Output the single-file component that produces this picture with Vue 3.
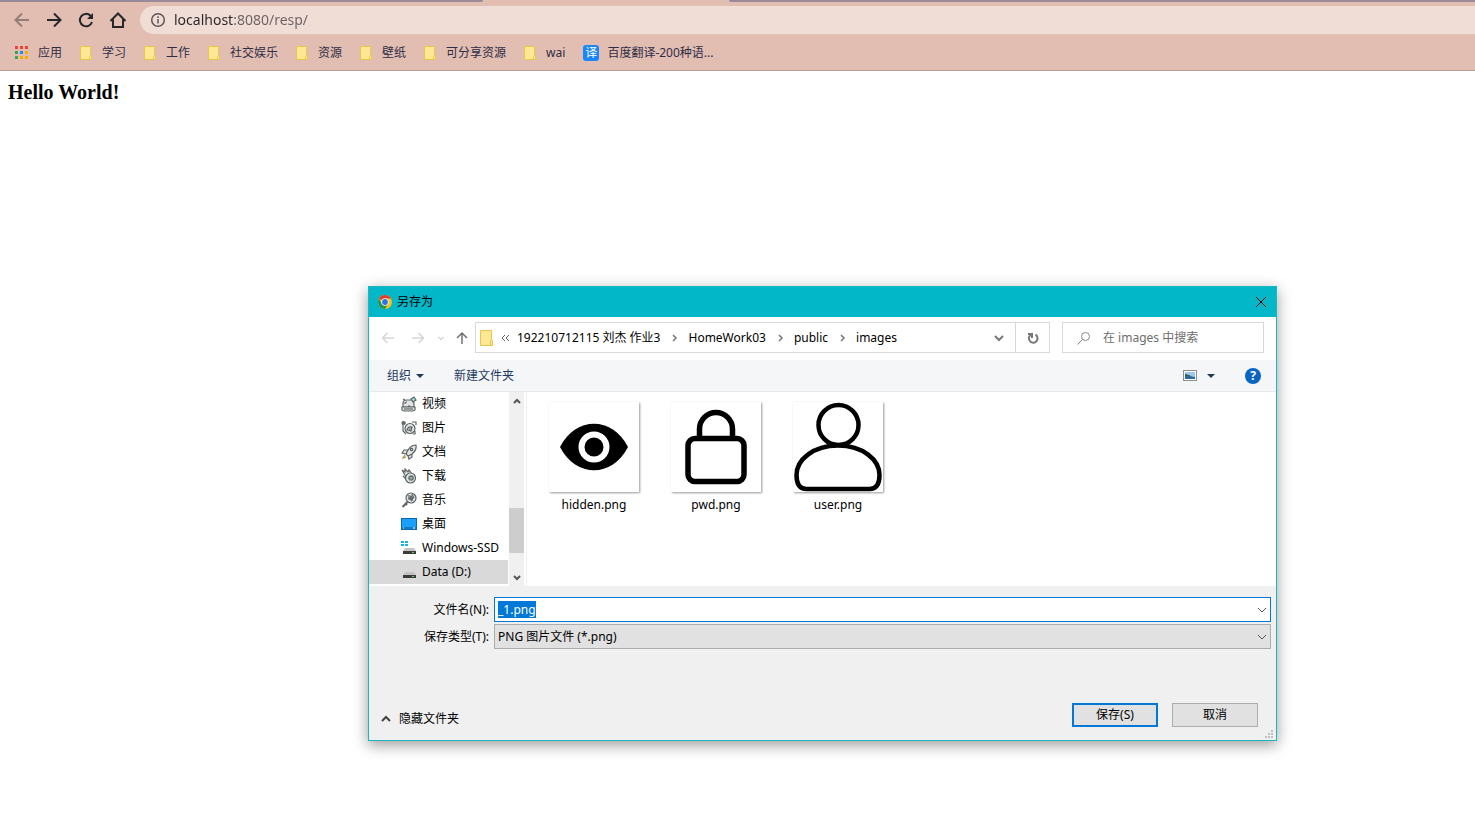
<script setup>
import { onMounted, ref } from 'vue'

const url = ref('localhost:8080/resp/')
const bookmarks = ['学习', '工作', '社交娱乐', '资源', '壁纸', '可分享资源', 'wai']
const crumbs = ['192210712115 刘杰 作业3', 'HomeWork03', 'public', 'images']
const places = [
  { name: '视频', icon: 'video' },
  { name: '图片', icon: 'picture' },
  { name: '文档', icon: 'rocket' },
  { name: '下载', icon: 'download' },
  { name: '音乐', icon: 'music' },
  { name: '桌面', icon: 'desktop' },
  { name: 'Windows-SSD', icon: 'ssd' },
  { name: 'Data (D:)', icon: 'disk' },
]
const selected = ref('Data (D:)')
const files = [
  { name: 'hidden.png', icon: 'eye' },
  { name: 'pwd.png', icon: 'lock' },
  { name: 'user.png', icon: 'user' },
]
const appColors = ['#ea4335', '#ea4335', '#ea4335', '#34a853', '#1a8cff', '#f9ab00', '#34a853', '#f9ab00', '#f9ab00']
const grip = [[6, 0], [3, 3], [6, 3], [0, 6], [3, 6], [6, 6]]
const filename = ref('_1.png')
const nameBox = ref(null)

onMounted(() => {
  nameBox.value.focus()
  nameBox.value.select()
})
</script>

<template>
  <div class="browser">
    <div class="tabs"><span class="tab-left"></span><span class="tab-right"></span></div>
    <header class="toolbar">
      <button class="nav faded" aria-label="Back">
        <svg viewBox="0 0 20 20"><path d="M17 10H4M10 3.500 3.500 10l6.500 6.500" /></svg>
      </button>
      <button class="nav" aria-label="Forward">
        <svg viewBox="0 0 20 20"><path d="M3 10h13M10 3.500 16.500 10 10 16.500" /></svg>
      </button>
      <button class="nav" aria-label="Reload">
        <svg viewBox="0 0 20 20"><path d="M16 12a6.200 6.200 0 1 1-1.500-6.300L16 7.300" /><path class="solid" d="M17 3v6h-6z" /></svg>
      </button>
      <button class="nav" aria-label="Home">
        <svg viewBox="0 0 20 20"><path d="M2.500 11 10 3.500l7.500 7.500M5 9.500V17h10V9.500" /></svg>
      </button>
      <div class="omnibox">
        <svg class="info" viewBox="0 0 16 16"><circle cx="8" cy="8" r="6.300" /><path d="M8 7v4.500M8 4.300v1.600" /></svg>
        <input v-model="url" aria-label="Address" spellcheck="false" />
      </div>
    </header>
    <nav class="bookmarks">
      <a href="#">
        <svg class="apps" viewBox="0 0 15 14">
          <rect v-for="(c, i) in appColors" :key="i" :x="(i % 3) * 5" :y="Math.floor(i / 3) * 5" width="3" height="3" :fill="c" />
        </svg>应用
      </a>
      <a v-for="b in bookmarks" :key="b" href="#">
        <svg class="folder" viewBox="0 0 14 14"><path d="M.5.5h10v9h1v4H.5z" /><path d="M9.500 13.500v-3l1-1" /></svg>{{ b }}
      </a>
      <a href="#"><span class="fanyi">译</span>百度翻译-200种语...</a>
    </nav>

    <main class="page">
      <h2>Hello World!</h2>
    </main>

    <section class="dialog" role="dialog" aria-label="另存为">
      <header class="title">
        <svg class="chrome" viewBox="0 0 16 16">
          <circle cx="8" cy="8" r="7" fill="#fbc116" />
          <path d="M8 8 1.940 4.500A7 7 0 0 1 14.060 4.500H8z" fill="#e33b2e" />
          <path d="M1.940 4.500A7 7 0 0 0 8 15l3-5.200L8 8 4.900 9.700z" fill="#219653" />
          <circle cx="8" cy="8" r="3.700" fill="#fff" />
          <circle cx="8" cy="8" r="2.900" fill="#2a74e8" />
        </svg>
        <span>另存为</span>
        <button class="close" aria-label="Close"><svg viewBox="0 0 12 12"><path d="m1 1 10 10M11 1 1 11" /></svg></button>
      </header>

      <div class="location">
        <button class="dim" aria-label="Back"><svg viewBox="0 0 14 14"><path d="M13 7H2M6.500 2 1.500 7l5 5" /></svg></button>
        <button class="dim" aria-label="Forward"><svg viewBox="0 0 14 14"><path d="M1 7h11M7.500 2l5 5-5 5" /></svg></button>
        <button class="dim" aria-label="Recent"><svg viewBox="0 0 14 14"><path d="m4.500 6 2.500 2.500L9.500 6" /></svg></button>
        <button class="up" aria-label="Up"><svg viewBox="0 0 14 14"><path d="M7 13V2M2 7l5-5 5 5" /></svg></button>
        <div class="address">
          <svg class="folder-big" viewBox="0 0 14 16"><path d="M.5.5h11v9l1 1v5H.5z" /><path d="M10.500 15.500v-5l1-1.500" /></svg>
          <svg class="more" viewBox="0 0 23 10"><path d="M11 2 8 5l3 3M15 2l-3 3 3 3" /></svg>
          <template v-for="(c, i) in crumbs" :key="c">
            <svg v-if="i" class="sep" viewBox="0 0 28 10"><path d="m13 2 3 3-3 3" /></svg>
            <button class="crumb">{{ c }}</button>
          </template>
          <button class="drop" aria-label="History"><svg viewBox="0 0 12 12"><path d="m2 4 4 4 4-4" /></svg></button>
          <button class="refresh" aria-label="Refresh"><svg viewBox="0 0 12 12"><path d="M8.500 2.700a4.300 4.300 0 1 1-5 .300M1 2h4v4" /></svg></button>
        </div>
        <label class="search">
          <svg viewBox="0 0 14 14"><circle cx="8.500" cy="5.500" r="4" /><path d="m5.500 8.500-5 5" /></svg>
          <input type="text" placeholder="在 images 中搜索" aria-label="在 images 中搜索" />
        </label>
      </div>

      <div class="commands">
        <button>组织<i class="tri"></i></button>
        <button>新建文件夹</button>
        <span class="grow"></span>
        <button class="view" aria-label="View">
          <svg viewBox="0 0 14 11">
            <rect x=".5" y=".5" width="13" height="10" fill="#fff" stroke="#8b8f94" />
            <path d="M2 2h10v4H2z" fill="#9dc9ee" /><path d="M2 5c3 0 5 1.500 10 1.500V9H2z" fill="#2c6a9d" /><path d="M2 4c2 0 4 1 6 2H2z" fill="#2f5f55" />
          </svg><i class="tri"></i>
        </button>
        <button class="help" aria-label="Help">?</button>
      </div>

      <div class="content">
        <ul class="tree">
          <li v-for="p in places" :key="p.name">
            <button :class="{ active: selected === p.name }" @click="selected = p.name">
              <svg viewBox="0 0 16 16" class="place">
                <g v-if="p.icon === 'video'" class="line">
                  <path d="M2 11V7q0-3 4-3h5l2 3v4z" /><path d="M1 11h13v3l-2 1H3l-2-1zM4 8q0-2 2-2M2 3l2 1M7 10h2" /><path d="m10 3 3-2 2 3-3 2z" fill="#9edbe0" /><path d="M3 13h9" />
                </g>
                <g v-else-if="p.icon === 'picture'" class="line">
                  <circle cx="9" cy="8.500" r="5" /><circle cx="2.500" cy="3" r="1.500" fill="#777" /><path fill="none" d="M5 3H2v8l3 3M11 2h4v3M14 11v3h-2" /><path d="M6 10q1-4 5-3l-1 4-3-1zM8 9h2" />
                </g>
                <g v-else-if="p.icon === 'rocket'" class="line">
                  <path d="M15 1q-5 0-8 5l-2 4 2 2 4-2q5-4 4-9zM7 6H3L1 9l4 1M11 10v3l-3 2-1-3" /><circle cx="10.500" cy="5.500" r="1.200" fill="#9edbe0" /><path d="M4 11 2 14l3-1" stroke="#b58a3a" />
                </g>
                <g v-else-if="p.icon === 'download'" class="line">
                  <path d="M5 9 1 2l3 2V1l3 3 1-2 3 4" /><circle cx="9.500" cy="10" r="5" /><circle cx="10" cy="10" r="2.200" fill="#8aa" /><path d="M5 11 2 8" />
                </g>
                <g v-else-if="p.icon === 'music'" class="line">
                  <circle cx="10" cy="6" r="5" /><path d="m6.500 10-5 5M4 11l2 2" stroke-width="2" /><path fill="none" d="M8 3v3l3 3M11 2l2 4M7 7h2" /><path d="m10 4 2 2-1 2-2-2z" fill="#51a8b0" />
                </g>
                <g v-else-if="p.icon === 'desktop'">
                  <rect x=".5" y="2.500" width="15" height="11" fill="#18a0fb" stroke="#0869ae" /><path d="M1 12h14" stroke="#08558e" /><path d="M2 12h1M12 12h2" stroke="#fff" />
                </g>
                <g v-else>
                  <g v-if="p.icon === 'ssd'" fill="#17b2e8"><path d="M0 1h3v2H0zM4 1h3v2H4zM0 4h3v2H0zM4 4h3v2H4z" /></g>
                  <path d="M4 8h9l2 3H2z" fill="#c4c4c4" /><path d="M2 11h13v3H2z" fill="#3b3b3b" /><path d="M11 12.500h2" stroke="#3fe06a" />
                </g>
              </svg>{{ p.name }}
            </button>
          </li>
        </ul>
        <div class="scrollbar">
          <button aria-label="Scroll up"><svg viewBox="0 0 10 10"><path d="m2 7 3-3 3 3" /></svg></button>
          <span class="thumb"></span>
          <button aria-label="Scroll down"><svg viewBox="0 0 10 10"><path d="m2 4 3 3 3-3" /></svg></button>
        </div>
        <div class="files">
          <figure v-for="f in files" :key="f.name">
            <svg viewBox="0 0 90 90" class="thumbnail">
              <g v-if="f.icon === 'eye'">
                <path d="M11 45C27 14 63 14 79 45 63 76 27 76 11 45z" /><circle cx="45" cy="45" r="12.500" fill="none" stroke="#fff" stroke-width="6" />
              </g>
              <g v-else-if="f.icon === 'lock'" fill="none" stroke="#000" stroke-width="5.500">
                <rect x="17" y="36.500" width="56" height="43" rx="7" /><path d="M28.500 36V27a16.500 16.500 0 0 1 33 0v9" />
              </g>
              <g v-else fill="none" stroke="#000" stroke-width="4.500">
                <circle cx="45.500" cy="23" r="20" /><path d="M45 43.500C20 43.500 3.500 58 3.500 73q0 14 10 14h63q10 0 10-14C86.500 58 70 43.500 45 43.500z" />
              </g>
            </svg>
            <figcaption>{{ f.name }}</figcaption>
          </figure>
        </div>
      </div>

      <footer class="bottom">
        <div class="form">
          <label for="fname">文件名(N):</label>
          <div class="combo">
            <input id="fname" ref="nameBox" v-model="filename" type="text" spellcheck="false" />
            <svg viewBox="0 0 10 10"><path d="m1 3 4 4 4-4" /></svg>
          </div>
          <label for="ftype">保存类型(T):</label>
          <div class="combo">
            <select id="ftype"><option>PNG 图片文件 (*.png)</option></select>
            <svg viewBox="0 0 10 10"><path d="m1 3 4 4 4-4" /></svg>
          </div>
        </div>
        <div class="actions">
          <button class="toggle"><svg viewBox="0 0 10 10"><path d="m1 7 4-4 4 4" /></svg>隐藏文件夹</button>
          <button class="push primary">保存(S)</button>
          <button class="push">取消</button>
        </div>
        <svg class="grip" viewBox="0 0 8 8"><rect v-for="(g, i) in grip" :key="i" :x="g[0]" :y="g[1]" width="2" height="2" /></svg>
      </footer>
    </section>
  </div>
</template>

<style>
body {
  margin: 0;
  background: #fff;
}
</style>

<style scoped>
.browser {
  position: relative;
  min-height: 100vh;
  overflow: hidden;
  font: 12px/16px "Noto Sans", "Noto Sans CJK SC", sans-serif;
  color: #000;
}
button, input, select {
  font: inherit;
  color: inherit;
  margin: 0;
  padding: 0;
  border: 0;
  background: none;
  border-radius: 0;
  outline: 0;
}
button {
  display: flex;
  align-items: center;
  justify-content: center;
  white-space: nowrap;
}
svg {
  display: block;
  flex: none;
  fill: none;
}
.tabs {
  display: flex;
  justify-content: space-between;
  height: 2px;
  background: #e2bdb2;
}
.tab-left, .tab-right {
  background: #988a98;
}
.tab-left {
  width: 483px;
  border-bottom-right-radius: 4px;
}
.tab-right {
  width: calc(100% - 729px);
  border-bottom-left-radius: 4px;
}
.toolbar {
  display: flex;
  align-items: center;
  gap: 12px;
  height: 36px;
  padding-left: 12px;
  background: #e2bdb2;
}
.nav svg {
  width: 20px;
  height: 20px;
  stroke: #26262b;
  stroke-width: 2;
}
.nav .solid {
  fill: #26262b;
  stroke: none;
}
.nav.faded svg {
  stroke: #927d79;
}
.omnibox {
  flex: 1;
  display: flex;
  align-items: center;
  gap: 8px;
  height: 28px;
  padding-left: 10px;
  border-radius: 14px 0 0 14px;
  background: #f0ddd6;
}
.info {
  width: 16px;
  height: 16px;
  stroke: #5c5658;
  stroke-width: 1.5;
}
.omnibox input {
  flex: 1;
  font-size: 14px;
  line-height: 20px;
  color: transparent;
  background: linear-gradient(90deg, #2a2629 60px, #6a6062 60px);
  -webkit-background-clip: text;
  background-clip: text;
}
.bookmarks {
  display: flex;
  align-items: center;
  gap: 18px;
  height: 30px;
  padding: 0 15px 2px;
  background: #e2bdb2;
  border-bottom: 1px solid #b99a94;
}
.bookmarks a {
  display: flex;
  align-items: center;
  gap: 8px;
  color: #2f2e45;
  text-decoration: none;
  white-space: nowrap;
}
.folder {
  width: 14px;
  height: 14px;
}
.apps {
  width: 15px;
  height: 14px;
}
.folder, .folder-big {
  fill: #ffe794;
  stroke: #e8c64a;
}
.fanyi {
  width: 16px;
  height: 16px;
  border-radius: 3px;
  background: #1a86fb;
  color: #fff;
  text-align: center;
}
.page {
  padding: 8px;
}
h2 {
  margin: 0;
  font: bold 20px/26px "Liberation Serif", serif;
}
.dialog {
  position: absolute;
  top: 286px;
  left: 368px;
  right: 198px;
  border: 1px solid #1bb7bd;
  background: #fff;
  box-shadow: 0 4px 14px rgba(0, 0, 0, 0.4);
}
.title {
  display: flex;
  align-items: center;
  gap: 4px;
  height: 30px;
  padding: 0 9px 0 8px;
  background: #02b7c7;
}
.chrome {
  width: 16px;
  height: 16px;
}
.close {
  margin-left: auto;
}
.close svg {
  width: 12px;
  height: 12px;
  stroke: #000;
}
.location {
  display: grid;
  grid-template-columns: 30px 30px 16px 26px 1fr 202px;
  align-items: center;
  height: 41px;
  padding: 0 12px 2px 4px;
}
.location > button svg {
  width: 14px;
  height: 14px;
  stroke-width: 1.5;
}
.dim svg {
  stroke: #d6d6d6;
}
.up svg {
  stroke: #707070;
}
.address {
  display: flex;
  align-items: center;
  height: 29px;
  margin-right: 12px;
  padding-left: 4px;
  border: 1px solid #d9d9d9;
}
.folder-big {
  width: 14px;
  height: 16px;
}
.more {
  width: 23px;
  height: 10px;
  stroke: #666;
}
.sep {
  width: 28px;
  height: 10px;
  stroke: #777;
  stroke-width: 1.5;
}
.drop {
  width: 32px;
  margin-left: auto;
}
.drop svg {
  width: 12px;
  height: 12px;
  stroke: #777;
  stroke-width: 2;
}
.refresh {
  width: 34px;
  height: 29px;
  border-left: 1px solid #d9d9d9;
}
.refresh svg {
  width: 12px;
  height: 12px;
  stroke: #777;
  stroke-width: 2;
}
.search {
  display: flex;
  align-items: center;
  gap: 12px;
  height: 29px;
  padding-left: 14px;
  border: 1px solid #d9d9d9;
}
.search svg {
  width: 14px;
  height: 14px;
  stroke: #888;
}
.search input {
  flex: 1;
  min-width: 0;
}
.search input::placeholder {
  color: #6d6d6d;
  opacity: 1;
}
.commands {
  display: flex;
  align-items: center;
  height: 31px;
  gap: 30px;
  padding: 0 15px 0 18px;
  background: #f4f6f8;
  border-bottom: 1px solid #e6e8ea;
  color: #1e395b;
}
.grow {
  flex: 1;
}
.tri {
  margin-left: 5px;
  border: 4px solid transparent;
  border-top-color: #1e395b;
  border-bottom: 0;
}
.view svg {
  width: 14px;
  height: 11px;
}
.view .tri {
  margin-left: 10px;
}
.help {
  width: 16px;
  height: 16px;
  border-radius: 50%;
  background: #0a64c4;
  color: #fff;
  font-weight: bold;
}
.content {
  display: flex;
  height: 194px;
}
.tree {
  width: 139px;
  margin: 0;
  padding: 0;
  list-style: none;
  overflow: hidden;
}
.tree button {
  justify-content: flex-start;
  gap: 5px;
  width: 100%;
  height: 24px;
  padding-left: 32px;
}
.tree .active {
  background: #d9d9d9;
}
.place {
  width: 16px;
  height: 16px;
}
.line {
  fill: #e2e4e4;
  stroke: #5e6466;
  stroke-width: 1.2;
}
.scrollbar {
  display: flex;
  flex-direction: column;
  width: 15px;
  margin-left: 1px;
  background: #f0f0f0;
}
.scrollbar button {
  height: 18px;
}
.scrollbar svg {
  width: 10px;
  height: 10px;
  stroke: #555;
  stroke-width: 2;
}
.thumb {
  height: 45px;
  margin: auto 0 15px;
  background: #cdcdcd;
}
.files {
  flex: 1;
  display: flex;
  align-items: flex-start;
  margin-left: 2px;
  padding: 10px 6px;
  border-left: 1px solid #f0f0f0;
}
figure {
  display: flex;
  flex-direction: column;
  align-items: center;
  gap: 5px;
  width: 122px;
  margin: 0;
}
.thumbnail {
  width: 90px;
  height: 90px;
  fill: #000;
  background: #fff;
  box-shadow: 1px 1px 2px rgba(0, 0, 0, 0.4);
}
.bottom {
  position: relative;
  padding: 11px 5px 13px;
  background: #f0f0f0;
}
.form {
  display: grid;
  grid-template-columns: 115px 1fr;
  gap: 2px 5px;
  align-items: center;
}
.form label {
  text-align: right;
}
.combo {
  position: relative;
}
.combo input, .combo select {
  display: block;
  box-sizing: border-box;
  width: 100%;
  height: 25px;
  padding: 0 20px 0 3px;
  border: 1px solid #0078d7;
  background: #fff;
}
.combo select {
  appearance: none;
  border-color: #adadad;
  background: #e1e1e1;
}
.combo input::selection {
  background: #0078d7;
  color: #fff;
}
.combo svg {
  position: absolute;
  right: 4px;
  top: 8px;
  width: 10px;
  height: 10px;
  stroke: #555;
  pointer-events: none;
}
.actions {
  display: flex;
  align-items: flex-end;
  gap: 14px;
  margin-top: 54px;
  padding: 0 13px 0 7px;
}
.toggle {
  gap: 8px;
  margin-right: auto;
}
.toggle svg {
  width: 10px;
  height: 10px;
  stroke: #444;
  stroke-width: 2;
}
.push {
  width: 86px;
  height: 24px;
  border: 1px solid #adadad;
  background: #e1e1e1;
}
.primary {
  border: 2px solid #0078d7;
}
.grip {
  position: absolute;
  right: 3px;
  bottom: 2px;
  width: 8px;
  height: 8px;
  fill: #bfbfbf;
}
</style>
